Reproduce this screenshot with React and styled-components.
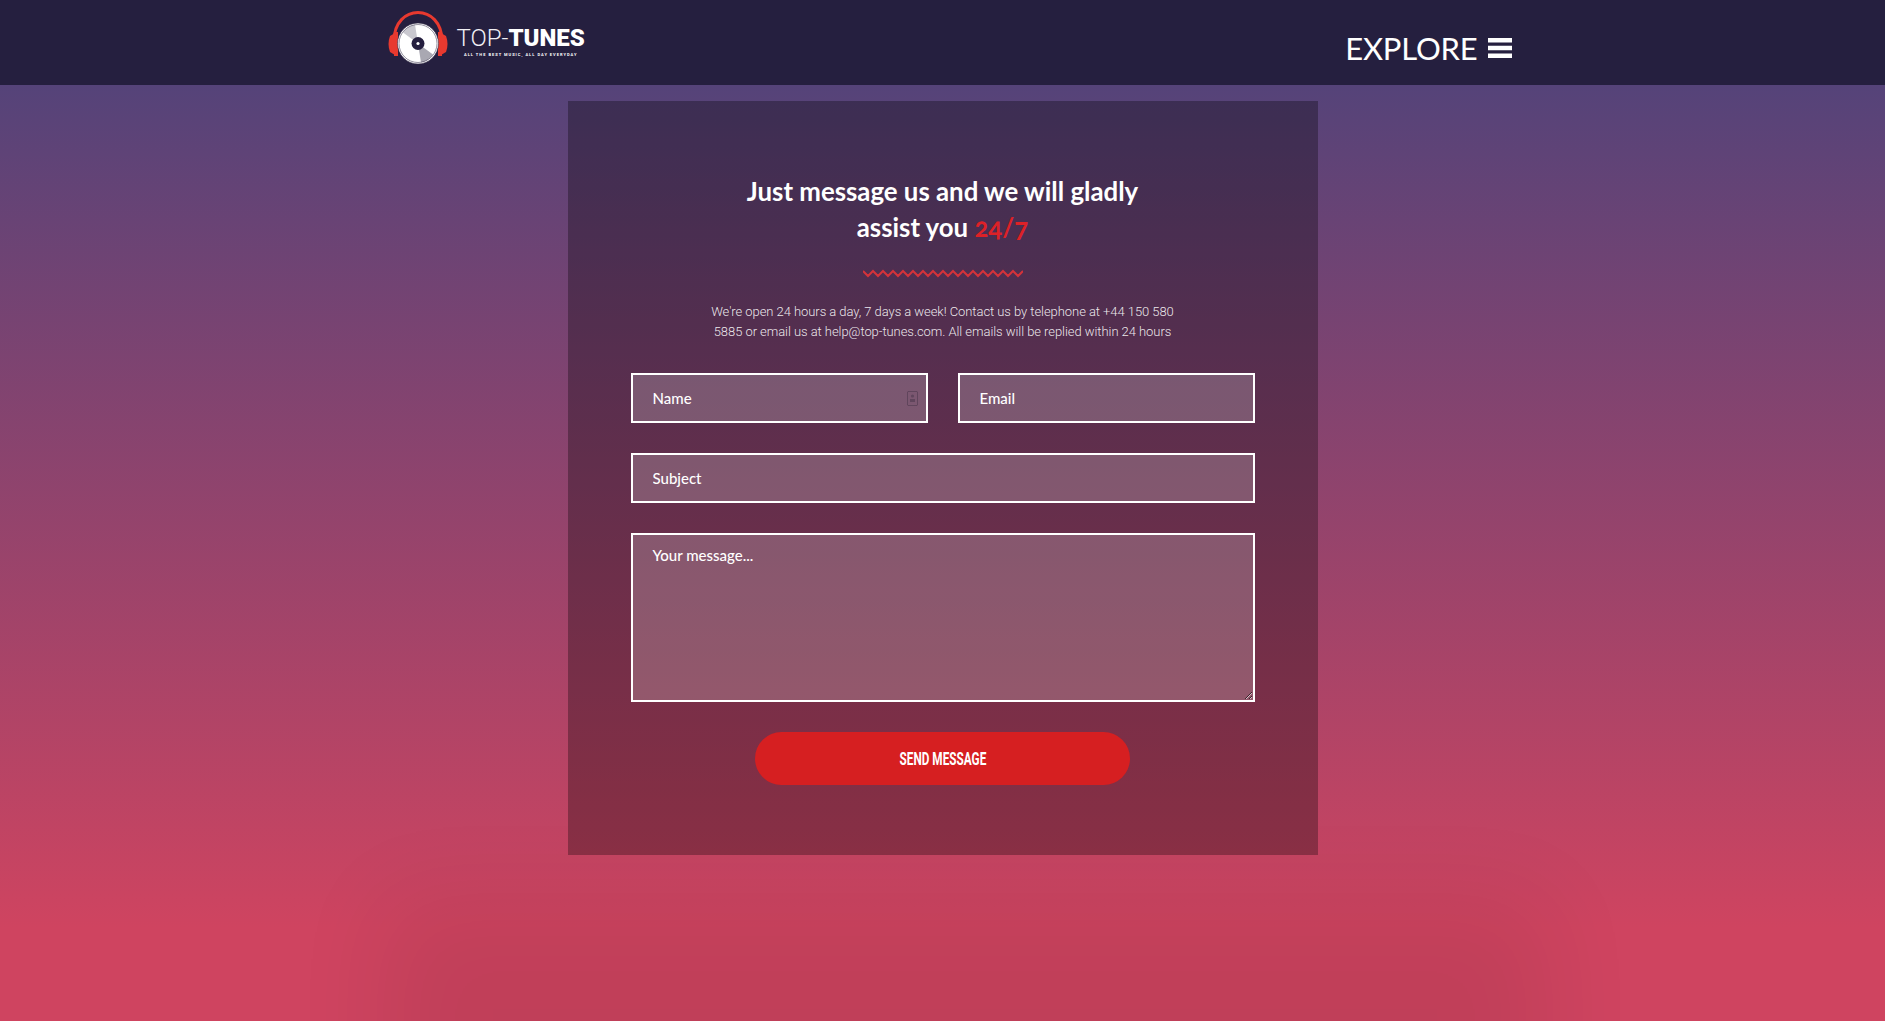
import React from 'react'
import styled, { createGlobalStyle } from 'styled-components'

const GlobalStyle = createGlobalStyle`
  html, body {
    margin: 0;
    padding: 0;
    height: 100%;
  }
  body {
    font-family: 'Lato', 'Liberation Sans', sans-serif;
    color: #fff;
  }
  * {
    box-sizing: border-box;
  }
`

const Page = styled.div`
  height: 100vh;
  overflow: hidden;
  background: #cf4460;
`

const Header = styled.header`
  height: 85px;
  background: #251f3f;
`

const HeaderInner = styled.div`
  width: 1170px;
  height: 100%;
  margin: 0 auto;
  padding: 0 15px;
  display: flex;
  justify-content: space-between;
`

const Brand = styled.a`
  display: flex;
  align-items: flex-start;
  gap: 9px;
  padding: 11px 0 0 15px;
`

const BrandText = styled.div`
  display: flex;
  flex-direction: column;
  padding-top: 14px;
`

const BrandName = styled.div`
  font-family: 'Roboto', sans-serif;
  font-weight: 300;
  font-size: 24px;
  line-height: 26px;
  color: #f1eff4;
  b {
    font-weight: 900;
    color: #fff;
  }
`

const BrandTag = styled.div`
  font-family: 'Roboto', sans-serif;
  font-weight: 700;
  font-size: 4px;
  line-height: 6px;
  letter-spacing: 1px;
  text-align: center;
  white-space: nowrap;
  margin-top: 1px;
`

const Explore = styled.button`
  display: flex;
  align-items: center;
  gap: 10px;
  height: 96px;
  padding: 0 1px 0 0;
  border: 0;
  background: none;
  color: #fff;
  font-family: 'Lato', sans-serif;
  font-weight: 400;
  font-size: 31px;
  letter-spacing: -0.2px;
`

const Main = styled.main`
  display: flex;
  justify-content: center;
  align-items: flex-start;
  padding-top: 16px;
  background: linear-gradient(to bottom, #554379 0%, #cf4460 90%, #cf4460 100%);
  height: 936px;
`

const Panel = styled.section`
  width: 750px;
  padding: 72px 63px 70px;
  background: rgba(0, 0, 0, 0.3);
  box-shadow: 22px 1005px 90px 206px rgba(0, 0, 0, 0.07);
  display: flex;
  flex-direction: column;
  align-items: center;
`

const Heading = styled.h2`
  margin: 0;
  font-family: 'Lato', sans-serif;
  font-weight: 700;
  font-size: 25.8px;
  line-height: 36px;
  text-align: center;
  span {
    color: #dd2127;
    font-variant-numeric: oldstyle-nums;
  }
`

const Squiggle = styled.svg`
  display: block;
  flex: none;
  margin: 24px 0 24px;
  fill: none;
  stroke: #d4333a;
  stroke-width: 2;
`

const Intro = styled.p`
  margin: 0 0 31px;
  width: 480px;
  font-family: 'Roboto', sans-serif;
  font-weight: 300;
  font-size: 13px;
  line-height: 20px;
  letter-spacing: -0.06px;
  text-align: center;
  color: rgba(255, 255, 255, 0.9);
`

const Form = styled.form`
  width: 100%;
  display: grid;
  grid-template-columns: 1fr 1fr;
  gap: 30px;
  justify-items: stretch;
`

const FieldWrap = styled.div`
  position: relative;
  grid-column: ${props => (props.$wide ? '1 / -1' : 'auto')};
  display: flex;
`

const fieldStyles = `
  width: 100%;
  border: 2px solid #fff;
  border-radius: 0;
  outline: 0;
  background: rgba(255, 255, 255, 0.2);
  color: #fff;
  font-family: 'Lato', sans-serif;
  font-weight: 500;
  font-size: 15px;
  &::placeholder {
    color: #fff;
    opacity: 1;
  }
`

const Input = styled.input`
  ${fieldStyles}
  height: 50px;
  padding: 0 20px;
`

const TextArea = styled.textarea`
  ${fieldStyles}
  display: block;
  height: 169px;
  padding: 11px 20px;
`

const ContactIcon = styled.svg`
  position: absolute;
  top: 18px;
  right: 10px;
  fill: none;
  stroke: rgba(40, 30, 50, 0.32);
`

const SendRow = styled.div`
  grid-column: 1 / -1;
  display: flex;
  justify-content: center;
`

const SendButton = styled.button`
  width: 375px;
  height: 53px;
  border: 0;
  border-radius: 27px;
  background: #d61f21;
  color: #fff;
  font-family: 'Roboto', 'Liberation Sans', sans-serif;
  font-weight: 700;
  font-size: 19px;
  text-transform: uppercase;
  span {
    display: inline-block;
    white-space: nowrap;
    transform: scaleX(0.62);
  }
`

const Logo = () => (
  <svg width="60" height="58" viewBox="0 0 60 58">
    <path d="M6 30 C6 -8 54 -8 54 30" fill="none" stroke="#e8392f" strokeWidth="3" />
    <path d="M7 22 L2 25 C0 30 0 36 2 41 L7 44 Z" fill="#e8392f" />
    <path d="M6 21 h4 v24 h-4 Z" fill="#e8392f" />
    <path d="M53 22 L58 25 C60 30 60 36 58 41 L53 44 Z" fill="#e8392f" />
    <path d="M50 21 h4 v24 h-4 Z" fill="#e8392f" />
    <circle cx="30" cy="32.5" r="20.5" fill="#fff" stroke="#2b2540" strokeWidth="0.6" />
    <path d="M30 32.5 L15 21.5 A19 19 0 0 1 27 13.5 Z" fill="#c9c8cf" />
    <path d="M30 32.5 L45 43.5 A19 19 0 0 1 33 51.5 Z" fill="#a9a8b2" />
    <circle cx="30" cy="32.5" r="19" fill="none" stroke="#2b2540" strokeWidth="0.5" />
    <circle cx="30" cy="32.5" r="6.5" fill="#251f3f" />
    <circle cx="30" cy="32.5" r="1.6" fill="#fff" />
  </svg>
)

const BarsIcon = () => (
  <svg width="24" height="20" viewBox="0 0 24 20" fill="#fff">
    <rect y="0" width="24" height="4.5" />
    <rect y="7.75" width="24" height="4.5" />
    <rect y="15.5" width="24" height="4.5" />
  </svg>
)

// 16 little teeth under the heading
const squigglePoints = Array.from({ length: 33 }, (_, i) => `${i * 5},${i % 2 ? 7 : 2}`).join(' ')

const App = () => (
  <Page>
    <GlobalStyle />
    <Header>
      <HeaderInner>
        <Brand>
          <Logo />
          <BrandText>
            <BrandName>TOP-<b>TUNES</b></BrandName>
            <BrandTag>ALL THE BEST MUSIC, ALL DAY EVERYDAY</BrandTag>
          </BrandText>
        </Brand>
        <Explore>
          EXPLORE
          <BarsIcon />
        </Explore>
      </HeaderInner>
    </Header>
    <Main>
      <Panel>
        <Heading>
          Just message us and we will gladly<br />
          assist you <span>24/7</span>
        </Heading>
        <Squiggle width="160" height="9" viewBox="0 0 160 9">
          <polyline points={squigglePoints} />
        </Squiggle>
        <Intro>
          We're open 24 hours a day, 7 days a week! Contact us by telephone at +44 150 580
          5885 or email us at help@top-tunes.com. All emails will be replied within 24 hours
        </Intro>
        <Form>
          <FieldWrap>
            <Input placeholder="Name" />
            <ContactIcon width="11" height="15" viewBox="0 0 11 15">
              <rect x="0.5" y="0.5" width="10" height="14" rx="1" />
              <circle cx="5.5" cy="5" r="1.6" fill="rgba(40,30,50,.32)" stroke="none" />
              <rect x="3" y="8" width="5" height="3" fill="rgba(40,30,50,.32)" stroke="none" />
            </ContactIcon>
          </FieldWrap>
          <FieldWrap>
            <Input placeholder="Email" />
          </FieldWrap>
          <FieldWrap $wide>
            <Input placeholder="Subject" />
          </FieldWrap>
          <FieldWrap $wide>
            <TextArea placeholder="Your message..." />
          </FieldWrap>
          <SendRow>
            <SendButton type="button"><span>Send message</span></SendButton>
          </SendRow>
        </Form>
      </Panel>
    </Main>
  </Page>
)

export default App
